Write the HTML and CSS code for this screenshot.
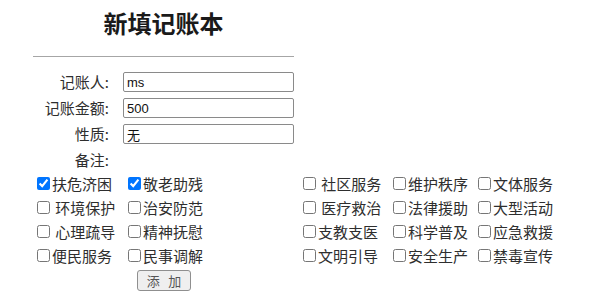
FILE: index.html
```html
<!DOCTYPE html>
<html lang="zh-CN">
<head>
<meta charset="utf-8">
<title>新填记账本</title>
<link rel="stylesheet" href="styles.css">
</head>
<body>
<div class="page">
  <div class="head">
    <h1 class="title">新填记账本</h1>
    <div class="rule"></div>
    <div class="form">
      <label class="lbl">记账人:</label><input class="field" type="text" value="ms">
      <label class="lbl">记账金额:</label><input class="field" type="text" value="500">
      <label class="lbl">性质:</label><input class="field" type="text" value="无">
      <label class="lbl">备注:</label><span></span>
    </div>
  </div>
  <div class="checks">
    <label class="item"><input type="checkbox" checked>扶危济困</label>
    <label class="item"><input type="checkbox" checked>敬老助残</label>
    <label class="item"><input type="checkbox">&nbsp;社区服务</label>
    <label class="item"><input type="checkbox">维护秩序</label>
    <label class="item"><input type="checkbox">文体服务</label>

    <label class="item"><input type="checkbox">&nbsp;环境保护</label>
    <label class="item"><input type="checkbox">治安防范</label>
    <label class="item"><input type="checkbox">&nbsp;医疗救治</label>
    <label class="item"><input type="checkbox">法律援助</label>
    <label class="item"><input type="checkbox">大型活动</label>

    <label class="item"><input type="checkbox">&nbsp;心理疏导</label>
    <label class="item"><input type="checkbox">精神抚慰</label>
    <label class="item"><input type="checkbox">支教支医</label>
    <label class="item"><input type="checkbox">科学普及</label>
    <label class="item"><input type="checkbox">应急救援</label>

    <label class="item"><input type="checkbox">便民服务</label>
    <label class="item"><input type="checkbox">民事调解</label>
    <label class="item"><input type="checkbox">文明引导</label>
    <label class="item"><input type="checkbox">安全生产</label>
    <label class="item"><input type="checkbox">禁毒宣传</label>
  </div>
  <div class="actions">
    <button class="btn" type="button">添&nbsp;&nbsp;&nbsp;加</button>
  </div>
</div>
</body>
</html>
```

FILE: styles.css
```css
html, body {
  margin: 0;
  padding: 0;
  background: #ffffff;
}

body {
  font-family: "Noto Sans CJK SC", "Noto Sans", sans-serif;
  color: #222222;
  font-size: 15px;
}

.page {
  width: 598px;
  height: 294px;
  overflow: hidden;
}

.head {
  width: 261px;
  margin-left: 33px;
}

.title {
  margin: 0;
  padding-top: 7px;
  height: 32px;
  line-height: 32px;
  font-size: 24px;
  font-weight: bold;
  text-align: center;
  color: #1a1a1a;
}

.rule {
  margin-top: 17px;
  border-top: 1px solid #a6a6a6;
}

.form {
  margin-top: 15px;
  display: grid;
  grid-template-columns: 82px 171px;
  column-gap: 8px;
  row-gap: 6px;
  grid-auto-rows: 20px;
}

.lbl {
  text-align: right;
  padding-right: 6px;
  line-height: 20px;
  font-size: 15px;
  color: #2e2e2e;
  white-space: nowrap;
}

.field {
  box-sizing: border-box;
  width: 171px;
  height: 20px;
  margin: 0;
  padding: 0 3px;
  border: 1px solid #8a8a8a;
  border-radius: 2px;
  font-family: "Liberation Sans", "Noto Sans CJK SC", sans-serif;
  font-size: 13px;
  color: #111111;
  background: #ffffff;
}

.checks {
  margin-left: 37px;
  margin-top: 1px;
  display: grid;
  grid-template-columns: 91px 175px 90px 85px auto;
  grid-auto-rows: 24px;
}

.item {
  display: flex;
  align-items: center;
  white-space: nowrap;
  font-size: 15px;
  color: #2e2e2e;
}

.item input {
  width: 13px;
  height: 13px;
  margin: 0 2px 0 0;
  flex: none;
}

.actions {
  margin-left: 137px;
  margin-top: 2px;
}

.btn {
  box-sizing: border-box;
  width: 54px;
  height: 21px;
  padding: 0;
  margin: 0;
  border: 1px solid #8f8f8f;
  border-radius: 3px;
  background: #efefef;
  font-family: "Noto Sans CJK SC", sans-serif;
  font-size: 13px;
  line-height: 19px;
  color: #555555;
}
```
